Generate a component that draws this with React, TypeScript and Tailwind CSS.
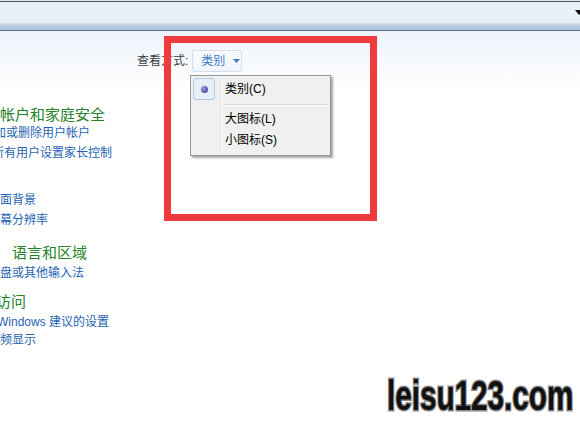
import React from "react";

const font = "font-['Liberation_Sans','Noto_Sans_CJK_SC',sans-serif]";

function Link({ children, className = "" }: { children: React.ReactNode; className?: string }) {
  return (
    <div className={`h-[18px] text-[12px] leading-[18px] whitespace-nowrap text-[#1f63b3] ${className}`}>
      {children}
    </div>
  );
}

function Heading({ children, className = "" }: { children: React.ReactNode; className?: string }) {
  return (
    <div className={`h-[18px] text-[15px] leading-[18px] whitespace-nowrap text-[#23822a] ${className}`}>
      {children}
    </div>
  );
}

export default function App() {
  return (
    <div className={`relative h-[429px] w-[580px] overflow-hidden bg-white ${font}`}>
      {/* window chrome */}
      <div className="h-[1px] bg-[#dfe6ee]" />
      <div className="h-[1px] bg-[#4f5a66]" />
      <div className="flex h-[21px] items-center justify-end bg-[#e8f0f8]">
        <svg width="8" height="5" viewBox="0 0 8 5" className="mr-[-3px]">
          <path d="M0 0h8L4 5z" fill="#111" />
        </svg>
      </div>
      <div className="h-[7px] bg-[linear-gradient(to_bottom,#dbe5f0,#b9cde3_40%,#a8c1dd)]" />
      <div className="h-[1px] bg-[#60707f]" />

      {/* content */}
      <div className="h-[398px] bg-[linear-gradient(to_bottom,#edf3fa,#ffffff_60px)]">
        <div className="flex pt-[19px] pl-[137px]">
          <div className="flex h-[22px] items-center text-[12px] text-[#3d3d3d]">查看方式:</div>
          <div className="ml-[4px] flex h-[22px] w-[50px] items-center gap-[8px] rounded-[2px] border border-[#d6e0ea] bg-[linear-gradient(to_bottom,#fbfdff,#eef4fa)] pl-[8px] text-[12px] text-[#3b7ac6]">
            <span>类别</span>
            <svg width="7" height="4" viewBox="0 0 7 4">
              <path d="M0 0h7L3.5 4z" fill="#3b7ac6" />
            </svg>
          </div>
        </div>

        <div className="mt-[34px] flex flex-col">
          <Heading>帐户和家庭安全</Heading>
          <Link className="ml-[-6px]">加或删除用户帐户</Link>
          <Link className="mt-[2px] ml-[-8px]">所有用户设置家长控制</Link>
          <Link className="mt-[29px]">面背景</Link>
          <Link className="mt-[2px]">幕分辨率</Link>
          <Heading className="mt-[15px] pl-[12px]">语言和区域</Heading>
          <Link className="mt-[2px]">盘或其他输入法</Link>
          <Heading className="mt-[11px] ml-[-4px]">访问</Heading>
          <Link className="mt-[2px] ml-[-3px]">Windows 建议的设置</Link>
          <Link>频显示</Link>
        </div>
      </div>

      {/* dropdown menu */}
      <div className="absolute top-[75px] left-[190px] h-[81px] w-[141px] border border-[#979797] bg-[#f0f0f0] shadow-[2px_2px_2px_rgba(0,0,0,0.35)]">
        <div className="absolute top-[1px] bottom-[1px] left-[29px] w-[1px] bg-[#e2e3e3]" />
        <div className="absolute top-[1px] bottom-[1px] left-[30px] w-[1px] bg-white" />
        <div className="flex h-[24px] items-center pt-[2px]">
          <div className="ml-[2px] flex h-[22px] w-[22px] items-center justify-center rounded-[3px] border border-[#aecbea] bg-[#e6eef8]">
            <div className="h-[7px] w-[7px] rounded-full bg-[radial-gradient(circle_at_35%_35%,#9a9ae0,#30308a)]" />
          </div>
          <span className="ml-[10px] text-[12px] text-black">类别(C)</span>
        </div>
        <div className="mt-[4px] ml-[32px] mr-[2px] h-[1px] bg-[#d7d7d7]" />
        <div className="ml-[32px] mr-[2px] h-[1px] bg-white" />
        <div className="flex h-[22px] items-center pt-[4px] pl-[34px] text-[12px] text-black">大图标(L)</div>
        <div className="flex h-[23px] items-center pt-[1px] pl-[34px] text-[12px] text-black">小图标(S)</div>
      </div>

      {/* red annotation box */}
      <div className="absolute top-[36px] left-[164px] h-[185px] w-[213px] border-[7px] border-[#ef3b3d]" />

      {/* watermark */}
      <div className="absolute top-[370px] left-[387px] origin-left scale-x-[0.69] font-['Liberation_Sans',sans-serif] text-[43px] leading-[50px] font-bold whitespace-nowrap text-[#111] [-webkit-text-stroke:3px_#8c8c8c] [paint-order:stroke_fill]">
        leisu123.com
      </div>
    </div>
  );
}
